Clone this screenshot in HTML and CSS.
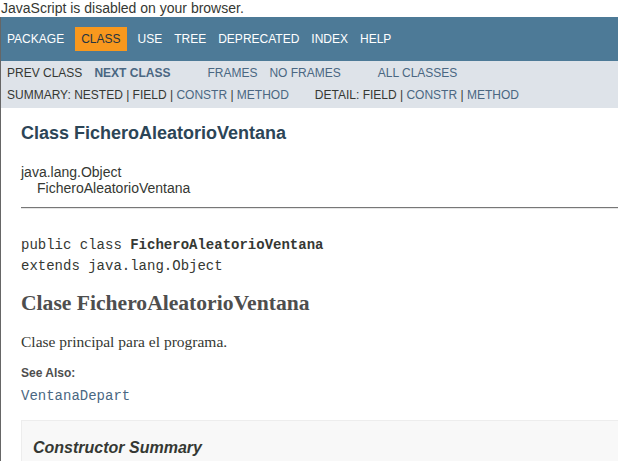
FILE: index.html
```html
<!DOCTYPE html>
<html>
<head>
<meta charset="utf-8">
<title>FicheroAleatorioVentana</title>
<link rel="stylesheet" href="styles.css">
</head>
<body>
<div class="noscript">JavaScript is disabled on your browser.</div>
<div class="page">
  <div class="topNav">
    <ul class="navList">
      <li>Package</li>
      <li class="navBarCell1Rev">Class</li>
      <li>Use</li>
      <li>Tree</li>
      <li>Deprecated</li>
      <li>Index</li>
      <li>Help</li>
    </ul>
  </div>
  <div class="subNav">
    <div class="subRow">
      <ul class="navList">
        <li>Prev Class</li>
        <li><a class="strong">Next Class</a></li>
      </ul>
      <ul class="navList">
        <li><a>Frames</a></li>
        <li><a>No Frames</a></li>
      </ul>
      <ul class="navList">
        <li><a>All Classes</a></li>
      </ul>
    </div>
    <div class="subRow2">
      <ul class="subNavList">
        <li>Summary:&nbsp;</li>
        <li>Nested&nbsp;|&nbsp;</li>
        <li>Field&nbsp;|&nbsp;</li>
        <li><a>Constr</a>&nbsp;|&nbsp;</li>
        <li><a>Method</a></li>
      </ul>
      <ul class="subNavList">
        <li>Detail:&nbsp;</li>
        <li>Field&nbsp;|&nbsp;</li>
        <li><a>Constr</a>&nbsp;|&nbsp;</li>
        <li><a>Method</a></li>
      </ul>
    </div>
  </div>
  <div class="header">
    <h2 class="title">Class FicheroAleatorioVentana</h2>
  </div>
  <div class="contentContainer">
    <ul class="inheritance">
      <li>java.lang.Object</li>
      <li class="child">FicheroAleatorioVentana</li>
    </ul>
    <hr class="rule">
    <pre class="sig">public class <b>FicheroAleatorioVentana</b>
extends java.lang.Object</pre>
    <h1 class="descTitle">Clase FicheroAleatorioVentana</h1>
    <p class="descText">Clase principal para el programa.</p>
    <div class="seeLabel">See Also:</div>
    <div class="seeLink"><a>VentanaDepart</a></div>
    <div class="summaryBox">
      <h3 class="summaryTitle">Constructor Summary</h3>
    </div>
  </div>
</div>
</body>
</html>
```
FILE: styles.css
```css
html, body {
  margin: 0;
  padding: 0;
  background: #ffffff;
  overflow: hidden;
}
body {
  color: #353833;
  font-family: "Liberation Sans", Arial, sans-serif;
  font-size: 14px;
  width: 618px;
  height: 461px;
}
.noscript {
  height: 17px;
  line-height: 17px;
  padding-left: 1px;
  color: #353833;
}
.page {
  border-left: 1px solid #666666;
  width: 720px;
  height: 444px;
}
ul {
  list-style: none;
  margin: 0;
  padding: 0;
}
a {
  color: #4a6782;
  text-decoration: none;
}
.topNav {
  background: #4d7a97;
  color: #ffffff;
  height: 33.6px;
  padding-top: 10px;
  font-size: 12px;
}
.navList {
  display: flex;
  margin-right: 25px;
}
.navList li {
  padding: 5px 6px;
  text-transform: uppercase;
  line-height: 14px;
}
.navList .navBarCell1Rev {
  background: #f8981d;
  color: #253441;
  margin: 0 5px;
}
.subNav {
  background: #dee3e9;
  font-size: 12px;
  padding-bottom: 1px;
}
.subRow {
  display: flex;
}
.strong {
  font-weight: bold;
}
.subRow2 {
  display: flex;
  padding: 3px 0 5px 6px;
  text-transform: uppercase;
  line-height: 14px;
}
.subNavList {
  display: flex;
  margin-right: 26px;
}
.header {
  margin: 0 20px;
  padding-top: 5px;
}
.title {
  color: #2c4557;
  font-size: 18px;
  margin: 10px 0;
  line-height: 21px;
}
.contentContainer {
  padding: 0 0 5px 20px;
}
.inheritance {
  padding-top: 10px;
}
.inheritance li {
  line-height: 16px;
}
.inheritance .child {
  padding-left: 16px;
}
.rule {
  margin: 11px 0 0 0;
  border: none;
  border-top: 1px solid #777777;
  border-bottom: 1px solid #e6e6e6;
  height: 0;
}
.sig {
  font-family: "Liberation Mono", "Courier New", monospace;
  font-size: 14px;
  line-height: 21px;
  margin: 26px 0 0 0;
  color: #353833;
}
.descTitle {
  font-family: "Liberation Serif", "Times New Roman", serif;
  font-size: 21.6px;
  font-weight: bold;
  color: #4e4e4e;
  margin: 14px 0 0 0;
  line-height: 24px;
}
.descText {
  font-family: "Liberation Serif", "Times New Roman", serif;
  font-size: 15.5px;
  margin: 18px 0 0 0;
  line-height: 18px;
  color: #353833;
}
.seeLabel {
  font-size: 12px;
  font-weight: bold;
  color: #4e4e4e;
  margin-top: 15px;
  line-height: 14px;
}
.seeLink {
  font-family: "Liberation Mono", "Courier New", monospace;
  font-size: 14px;
  margin-top: 7px;
  line-height: 18px;
}
.summaryBox {
  margin-top: 15px;
  background: #f8f8f8;
  border: 1px solid #ededed;
  padding: 17px 11px 13px;
}
.summaryTitle {
  margin: 0;
  font-size: 16px;
  font-style: italic;
  font-weight: bold;
  line-height: 19px;
  color: #353833;
}
```
